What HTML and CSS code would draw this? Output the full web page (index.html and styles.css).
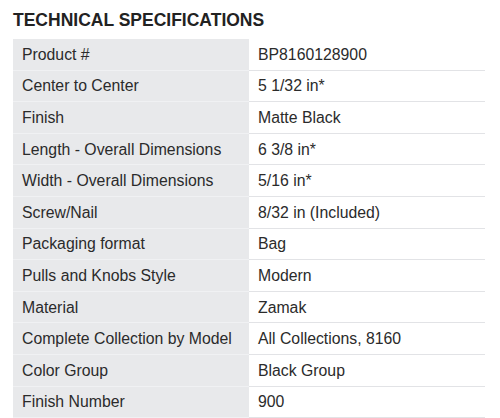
FILE: index.html
```html
<!DOCTYPE html>
<html>
<head>
<meta charset="utf-8">
<link rel="stylesheet" href="styles.css">
</head>
<body>
<section class="specs">
  <h2 class="specs-title">TECHNICAL SPECIFICATIONS</h2>
  <table class="specs-table">
    <tr><th>Product #</th><td>BP8160128900</td></tr>
    <tr><th>Center to Center</th><td>5 1/32 in*</td></tr>
    <tr><th>Finish</th><td>Matte Black</td></tr>
    <tr><th>Length - Overall Dimensions</th><td>6 3/8 in*</td></tr>
    <tr><th>Width - Overall Dimensions</th><td>5/16 in*</td></tr>
    <tr><th>Screw/Nail</th><td>8/32 in (Included)</td></tr>
    <tr><th>Packaging format</th><td>Bag</td></tr>
    <tr><th>Pulls and Knobs Style</th><td>Modern</td></tr>
    <tr><th>Material</th><td>Zamak</td></tr>
    <tr><th>Complete Collection by Model</th><td>All Collections, 8160</td></tr>
    <tr><th>Color Group</th><td>Black Group</td></tr>
    <tr><th>Finish Number</th><td>900</td></tr>
  </table>
</section>
</body>
</html>
```
FILE: styles.css
```css
html, body {
  margin: 0;
  padding: 0;
  background: #ffffff;
}
body {
  font-family: "Liberation Sans", Arial, Helvetica, sans-serif;
  color: #2b2b2b;
}
.specs {
  padding: 11px 13px 0 13px;
}
.specs-title {
  margin: 0 0 10px 0;
  font-size: 17.5px;
  font-weight: bold;
  color: #222;
  line-height: 18px;
}
.specs-table {
  width: 472px;
  border-collapse: collapse;
  font-size: 15.8px;
}
.specs-table th,
.specs-table td {
  height: 29.6px;
  padding: 1px 0 0 9px;
  text-align: left;
  font-weight: normal;
  vertical-align: middle;
  border-bottom: 1px solid #e2e3e6;
}
.specs-table th {
  width: 227px;
  background: #e8e9eb;
  border-bottom-color: #f0f1f3;
}
.specs-table td {
  background: #fff;
}
```
